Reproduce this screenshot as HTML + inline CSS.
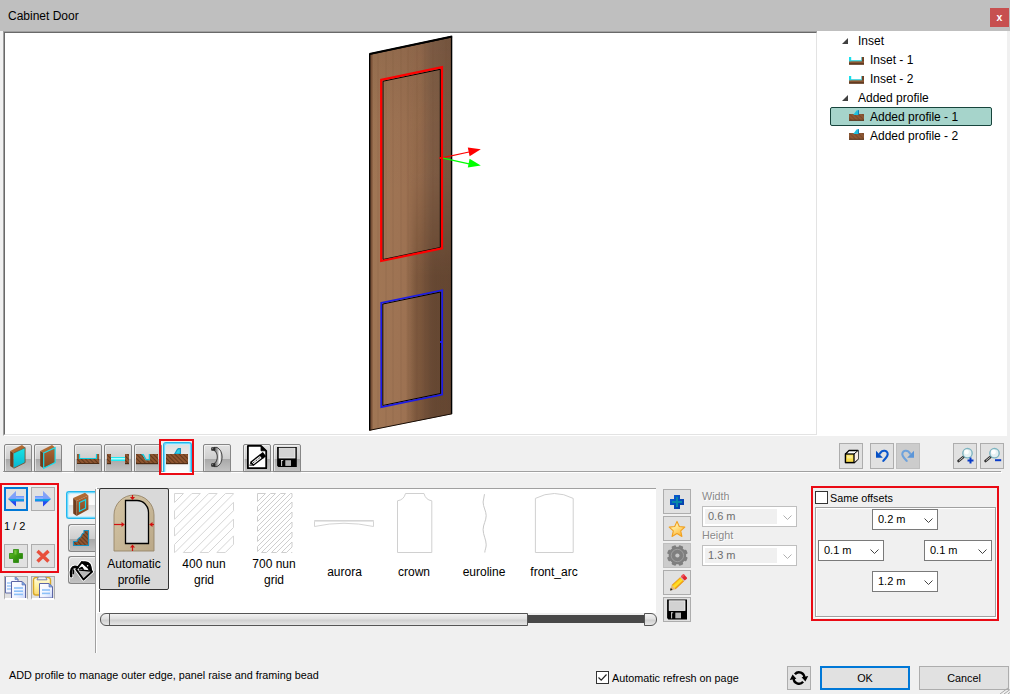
<!DOCTYPE html>
<html><head><meta charset="utf-8"><title>Cabinet Door</title>
<style>
*{box-sizing:border-box;margin:0;padding:0}
html,body{width:1010px;height:694px;overflow:hidden;background:#f0f0f0}
body{position:relative;font-family:"Liberation Sans",sans-serif;font-size:12px;color:#000}
.abs{position:absolute}
#title{left:0;top:0;width:1010px;height:31px;background:#bfbfbf}
#title span{position:absolute;left:8px;top:9px;font-size:12px;line-height:15px;color:#000}
#close{left:990px;top:8px;width:19px;height:19px;background:#c75050;color:#fff;font-weight:bold;font-size:10.5px;line-height:19px;text-align:center}
#view{left:3px;top:31px;width:815px;height:405px;background:#fff;border-style:solid;border-width:1px;border-color:#a0a0a0 #fff #fff #a0a0a0}
#view:before{content:"";position:absolute;left:0;top:0;right:0;bottom:0;border-style:solid;border-width:1px;border-color:#696969 #e3e3e3 #e3e3e3 #696969}
#tree{left:817px;top:31px;width:190px;height:405px;background:#fff}
.trow{position:absolute;left:0;height:19px;line-height:21px;font-size:12px;white-space:nowrap}
.tri{position:absolute;width:0;height:0;border-left:6px solid transparent;border-bottom:6px solid #404040}
.sep{left:3px;top:471px;width:998px;height:1px;background:#a0a0a0}
.sep2{left:3px;top:472px;width:999px;height:1px;background:#fff}
.tb{position:absolute;width:28px;height:28px;top:444px;box-shadow:0 1px 0 #f0f0f0,inset 1px 1px 0 rgba(255,255,255,0.55);border:1px solid #868686;border-radius:2px 2px 0 0;background:linear-gradient(#e2e2e2 0,#cecece 53%,#a8a8a8 54%,#c2c2c2 100%)}
.fb{position:absolute;background:#e1e1e1;border:1px solid #adadad}
.redbox{position:absolute;border:2px solid #ea0a14}
.tah{font-size:10.8px}
.lbl{text-align:center;font-size:12px;line-height:16px;white-space:nowrap}
.combo{position:absolute;height:21px;background:#fff;border:1px solid #7a7a7a;font-size:11px;line-height:19px;padding-left:5px}
.combo svg{position:absolute;right:4px;top:8px}
</style></head><body>
<div id="title" class="abs"><span>Cabinet Door</span></div>
<div id="close" class="abs">x</div>
<div id="view" class="abs"><svg class="abs" style="left:1px;top:1px" width="811" height="401" viewBox="5 33 811 401">
<defs>
<linearGradient id="wood" x1="0" x2="1" y1="0" y2="0">
<stop offset="0" stop-color="#a17755"/><stop offset="0.35" stop-color="#9e7353"/><stop offset="0.62" stop-color="#9a6f50"/><stop offset="0.74" stop-color="#87634a"/><stop offset="1" stop-color="#7d5b43"/>
</linearGradient>
<linearGradient id="woodv" x1="0" x2="0" y1="0" y2="1">
<stop offset="0" stop-color="#fff" stop-opacity="0"/><stop offset="0.35" stop-color="#fff" stop-opacity="0.25"/><stop offset="0.6" stop-color="#fff" stop-opacity="1"/><stop offset="1" stop-color="#fff" stop-opacity="1"/>
</linearGradient>
<linearGradient id="shade" x1="0" x2="1" y1="0" y2="0">
<stop offset="0.44" stop-color="#2a1608" stop-opacity="0"/><stop offset="0.56" stop-color="#2a1608" stop-opacity="0.26"/><stop offset="0.8" stop-color="#2a1608" stop-opacity="0.34"/><stop offset="1" stop-color="#2a1608" stop-opacity="0.3"/>
</linearGradient>
<linearGradient id="topd" x1="0" x2="0" y1="0" y2="1"><stop offset="0" stop-color="#3a2a20" stop-opacity="0.14"/><stop offset="0.22" stop-color="#3a2a20" stop-opacity="0.03"/><stop offset="0.4" stop-color="#3a2a20" stop-opacity="0"/></linearGradient>
<mask id="vm" maskUnits="userSpaceOnUse" x="360" y="30" width="100" height="410"><rect x="360" y="30" width="100" height="410" fill="url(#woodv)"/></mask>
</defs>
<polygon points="369.5,54 452,36.5 452,414 369.5,430.5" fill="url(#wood)"/>
<polygon points="369.5,54 452,36.5 452,414 369.5,430.5" fill="url(#shade)" mask="url(#vm)"/><polygon points="369.5,54 452,36.5 452,414 369.5,430.5" fill="url(#topd)"/>
<g stroke="#6f4a33" stroke-width="1" opacity="0.18">
<line x1="378" y1="53" x2="378" y2="429"/><line x1="386" y1="51" x2="386" y2="427"/><line x1="393" y1="50" x2="393" y2="426"/><line x1="401" y1="48" x2="401" y2="424"/><line x1="408" y1="46" x2="408" y2="423"/><line x1="417" y1="45" x2="417" y2="421"/><line x1="425" y1="43" x2="425" y2="419"/><line x1="433" y1="41" x2="433" y2="418"/><line x1="446" y1="39" x2="446" y2="415"/>
</g>
<polygon points="369.5,54 372.5,53.4 372.5,430 369.5,430.5" fill="#7a5238"/>
<polyline points="369.7,430.5 369.7,54 451.6,36.7 451.6,414" fill="none" stroke="#000" stroke-width="1.4"/>
<line x1="369.5" y1="54" x2="452" y2="36.5" stroke="#000" stroke-width="2"/>
<line x1="369.5" y1="430.3" x2="452" y2="413.8" stroke="#1a0f08" stroke-width="1"/>
<!-- red frame -->
<polygon points="383,81.2 440.3,69.3 440.3,247.5 383,259.5" fill="none" stroke="#000" stroke-width="1"/>
<polygon points="381.2,79.8 442,67.2 442,248.3 381.2,261" fill="none" stroke="#f00" stroke-width="2.2"/>
<!-- blue frame -->
<polygon points="382.8,304 440.6,292 440.6,393.5 382.8,405.5" fill="none" stroke="#000" stroke-width="1"/>
<polygon points="381.2,302.8 442.2,290.2 442.2,394.6 381.2,407.2" fill="none" stroke="#1c1ce6" stroke-width="1.7"/>
<rect x="440" y="341" width="3" height="2" fill="#1c1ce6"/>
<!-- axes -->
<line x1="439.5" y1="158" x2="444" y2="158" stroke="#f00" stroke-width="2"/>
<line x1="442" y1="157.8" x2="469" y2="152" stroke="#f00" stroke-width="1.2"/>
<polygon points="467.8,147.4 480.8,149.3 469.6,156.2" fill="#f00"/>
<line x1="443" y1="158.2" x2="469" y2="163.8" stroke="#0f0" stroke-width="1.2"/>
<polygon points="469.6,158.8 480.8,165.6 467.8,167.6" fill="#0f0"/>
</svg></div>
<div id="tree" class="abs"><div class="tri" style="left:25px;top:7px"></div><div class="trow" style="left:41px;top:0px">Inset</div><svg class="abs" style="left:32px;top:26px" width="15" height="8" viewBox="0 0 15 8"><rect x="0" y="4" width="15" height="3.6" fill="#96603a"/><rect x="0" y="5.6" width="15" height="1" fill="#7a4a2a"/><rect x="0" y="6.4" width="15" height="1.2" fill="#4e2e18"/><rect x="0" y="0" width="2.2" height="4.2" fill="#18e0ec"/><rect x="0" y="3.2" width="13" height="1.1" fill="#30d0dc"/><rect x="12.6" y="0" width="2.4" height="4.4" fill="#704428"/><rect x="12" y="0" width="0.8" height="4" fill="#60c8d0"/></svg><div class="trow" style="left:53px;top:19px">Inset - 1</div><svg class="abs" style="left:32px;top:45px" width="15" height="8" viewBox="0 0 15 8"><rect x="0" y="4" width="15" height="3.6" fill="#96603a"/><rect x="0" y="5.6" width="15" height="1" fill="#7a4a2a"/><rect x="0" y="6.4" width="15" height="1.2" fill="#4e2e18"/><rect x="0" y="0" width="2.2" height="4.2" fill="#18e0ec"/><rect x="0" y="3.2" width="13" height="1.1" fill="#30d0dc"/><rect x="12.6" y="0" width="2.4" height="4.4" fill="#704428"/><rect x="12" y="0" width="0.8" height="4" fill="#60c8d0"/></svg><div class="trow" style="left:53px;top:38px">Inset - 2</div><div class="tri" style="left:25px;top:64px"></div><div class="trow" style="left:41px;top:57px">Added profile</div><div class="abs" style="left:13px;top:76px;width:162px;height:19px;background:#a6d4cb;border:1px solid #17443c;border-radius:2px"></div><svg class="abs" style="left:32px;top:79px" width="15" height="11" viewBox="0 0 15 11"><rect x="0" y="4" width="15" height="6.6" fill="#8c5a38"/><rect x="0" y="4" width="15" height="6.6" fill="url(#hatch)" opacity="0.45"/><rect x="0" y="9.8" width="15" height="0.9" fill="#4e2e18"/><polygon points="4.2,5 7.8,0.2 9.8,0.2 9.8,5" fill="#20c0dc"/><rect x="9" y="0.2" width="0.9" height="4.8" fill="#1274b4"/></svg><div class="trow" style="left:53px;top:76px">Added profile - 1</div><svg class="abs" style="left:32px;top:98px" width="15" height="11" viewBox="0 0 15 11"><rect x="0" y="4" width="15" height="6.6" fill="#8c5a38"/><rect x="0" y="4" width="15" height="6.6" fill="url(#hatch)" opacity="0.45"/><rect x="0" y="9.8" width="15" height="0.9" fill="#4e2e18"/><polygon points="4.2,5 7.8,0.2 9.8,0.2 9.8,5" fill="#20c0dc"/><rect x="9" y="0.2" width="0.9" height="4.8" fill="#1274b4"/></svg><div class="trow" style="left:53px;top:95px">Added profile - 2</div></div>
<div class="abs sep"></div><div class="abs sep2"></div>
<!--TOOLBAR--><svg width="0" height="0" style="position:absolute"><defs>
<linearGradient id="cy" x1="0" y1="0" x2="0" y2="1"><stop offset="0" stop-color="#18e4e4"/><stop offset="1" stop-color="#08b4d0"/></linearGradient>
<linearGradient id="br" x1="0" y1="0" x2="0" y2="1"><stop offset="0" stop-color="#ac6634"/><stop offset="1" stop-color="#7e451f"/></linearGradient>
<linearGradient id="brh" x1="0" y1="0" x2="0" y2="1"><stop offset="0" stop-color="#a86434"/><stop offset="0.8" stop-color="#8a4e26"/><stop offset="1" stop-color="#5a3418"/></linearGradient>
<pattern id="hatch" width="3" height="3" patternUnits="userSpaceOnUse" patternTransform="rotate(-45)"><rect width="3" height="3" fill="#8e5530"/><rect width="1" height="3" fill="#63391c"/></pattern>
<linearGradient id="metal" x1="0" y1="0" x2="1" y2="0"><stop offset="0" stop-color="#555"/><stop offset="0.35" stop-color="#999"/><stop offset="0.7" stop-color="#fafafa"/><stop offset="1" stop-color="#aaa"/></linearGradient>
</defs></svg>
<div class="tb" style="left:4px"><svg class="abs" style="left:-1px;top:-1px" width="28" height="28" viewBox="0 0 28 28"><polygon points="6.2,7 18,1 21.1,3.6 9.7,9" fill="#b06a32"/><polygon points="6.2,7 9.7,9 9.7,24.3 6.2,22" fill="#6e3c1c"/><polygon points="9.7,9 21.1,3.6 21.1,18.6 9.7,24.3" fill="url(#cy)"/><polyline points="9.7,9 21.1,3.6 21.1,18.6 9.7,24.3" fill="none" stroke="#7a4420" stroke-width="0.8"/></svg></div>
<div class="tb" style="left:34px"><svg class="abs" style="left:-1px;top:-1px" width="28" height="28" viewBox="0 0 28 28"><polygon points="6.2,7 18,1 21.1,3.6 9.7,9" fill="#b06a32"/><polygon points="6.2,7 9.7,9 9.7,24.3 6.2,22" fill="#6e3c1c"/><polygon points="9.7,9 21.1,3.6 21.1,18.6 9.7,24.3" fill="url(#br)" stroke="#18dcec" stroke-width="1.2"/></svg></div>
<div class="tb" style="left:74px"><svg class="abs" style="left:-1px;top:-1px" width="28" height="28" viewBox="0 0 28 28"><rect x="3" y="10" width="2" height="10" fill="#96582c"/><rect x="23" y="10" width="2.1" height="10" fill="#96582c"/><rect x="3" y="15" width="22.1" height="5" fill="url(#hatch)"/><rect x="3" y="19" width="22.1" height="1" fill="#4e2c14"/><polyline points="5.5,10 5.5,14.5 22.5,14.5 22.5,10" fill="none" stroke="#10cce0" stroke-width="1.2"/></svg></div>
<div class="tb" style="left:104px"><svg class="abs" style="left:-1px;top:-1px" width="28" height="28" viewBox="0 0 28 28"><rect x="3" y="10" width="4" height="10" fill="url(#hatch)"/><rect x="21" y="10" width="4" height="10" fill="url(#hatch)"/><rect x="3" y="19" width="4" height="1.2" fill="#4e2c14"/><rect x="21" y="19" width="4" height="1.2" fill="#4e2c14"/><rect x="7" y="13" width="14" height="4" fill="#20e8f0"/><rect x="7" y="14" width="14" height="1.5" fill="#b0ffff"/></svg></div>
<div class="tb" style="left:134px"><svg class="abs" style="left:-1px;top:-1px" width="28" height="28" viewBox="0 0 28 28"><polygon points="2,10 8,10 11.6,16.2 16,16.2 16,10 24,10 24,20 2,20" fill="url(#hatch)"/><rect x="2" y="19" width="22" height="1.2" fill="#4e2c14"/><polyline points="7.5,10.6 9.2,10.6 12,15.6 15.4,15.6 15.4,10" fill="none" stroke="#14c8dc" stroke-width="1.3"/></svg></div>
<div class="tb" style="left:203px"><svg class="abs" style="left:-1px;top:-1px" width="28" height="28" viewBox="0 0 28 28"><path d="M11,3.4 L14,3.4 C20.8,6.5 20.8,19.5 14,22.6 L11,22.6 L11,19.6 C15.4,17.5 15.4,8.5 11,6.4 Z" fill="url(#metal)" stroke="#333" stroke-width="0.9"/><rect x="8.2" y="3.2" width="4" height="3.6" rx="0.8" fill="#2a2a2a"/><rect x="8.2" y="19.2" width="4" height="3.6" rx="0.8" fill="#2a2a2a"/><rect x="9" y="4" width="1.2" height="1.2" fill="#777"/><rect x="9" y="20" width="1.2" height="1.2" fill="#777"/></svg></div>
<div class="tb" style="left:243px"><svg class="abs" style="left:-1px;top:-1px" width="28" height="28" viewBox="0 0 28 28"><path d="M4.9,1.9 L18,1.9 L23.2,6.8 L23.2,24.2 L4.9,24.2 Z" fill="#fff" stroke="#000" stroke-width="1.8" stroke-linejoin="round"/><path d="M18,1.9 L18,6.8 L23.2,6.8 Z" fill="#000" stroke="#000" stroke-width="0.8"/><g transform="translate(9.2,19.6) rotate(-37.6)"><rect x="0" y="-2" width="11.5" height="4" fill="#fff" stroke="#000" stroke-width="1.3"/><line x1="1" y1="0" x2="11" y2="0" stroke="#000" stroke-width="0.9" stroke-dasharray="1,1"/><rect x="11.5" y="-2.7" width="4" height="5.4" fill="#000"/><polygon points="0,-2.4 -3.6,0 0,2.4" fill="#000"/><polygon points="-1.2,-0.8 -2.6,0 -1.2,0.8" fill="#fff"/></g></svg></div>
<div class="tb" style="left:273px"><svg class="abs" style="left:-1px;top:-1px" width="28" height="28" viewBox="0 0 28 28"><path d="M4.1,3 H23.8 V23 H5.4 L4.1,21.7 Z" fill="#000"/><rect x="6.2" y="4.2" width="15.8" height="9.8" fill="#d2d2d2" stroke="#f4f4f4" stroke-width="0.8"/><rect x="12.3" y="16.2" width="5.7" height="5.7" fill="#b4b4b4"/><rect x="8.2" y="16" width="0.9" height="6" fill="#e8e8e8"/><rect x="8.2" y="16" width="2" height="0.8" fill="#e8e8e8"/></svg></div>
<div class="abs" style="left:163px;top:442px;width:29px;height:30px;border:1px solid #22b8ee;border-bottom:none;border-radius:3px 3px 0 0;background:linear-gradient(#dedede,#ececec 45%,#fdfdfd);box-shadow:inset 1px 1px 0 #6fd6fa,inset -1px 0 0 #6fd6fa,inset 2px 2px 1px #c4eefc,inset -2px 0 1px #c4eefc"><svg class="abs" style="left:0px;top:1px" width="28" height="28" viewBox="0 0 28 28"><path d="M9,10.4 C11.5,9.6 11.8,4.8 14.4,4 L17,4 L17,10.4 Z" fill="#1498c4"/><path d="M11.4,9.6 C12.8,8 13.2,5.8 14.8,5.2 L15.8,5.2 L15.8,9.6 Z" fill="#2cd0e8"/><rect x="2" y="10" width="22" height="10" fill="url(#hatch)"/><rect x="2" y="19" width="22" height="1.2" fill="#4e2c14"/></svg></div>
<div class="redbox" style="left:159px;top:439px;width:35px;height:36px"></div>
<div class="fb" style="left:839px;top:443px;width:24px;height:26px;"><svg class="abs" style="left:4px;top:5px" width="16" height="15" viewBox="0 0 16 15"><polygon points="1.5,5 5,1.5 14,1.5 14,10 10.5,13.5 1.5,13.5" fill="#fff" stroke="#000" stroke-width="1.3" stroke-linejoin="round"/><polygon points="10,5 14,1.5 14,10 10,13.5" fill="#f8ece6"/><rect x="1.5" y="5" width="8.5" height="8.5" fill="#f8dc50" stroke="#000" stroke-width="1.3"/><rect x="3" y="6.5" width="5.5" height="3" fill="#fcf0a0" opacity="0.8"/><polyline points="10,5 14,1.5" fill="none" stroke="#000" stroke-width="1"/></svg></div>
<div class="fb" style="left:870px;top:443px;width:24px;height:26px;"><svg class="abs" style="left:-1px;top:-1px" width="24" height="26" viewBox="0 0 24 26"><path d="M9.8,10.6 C11,8.6 13,7.5 14.8,7.8 C17.4,8.3 18.3,10.6 17.3,12.7 C16.4,14.6 14.6,16.4 13.3,17.9" fill="none" stroke="#0a56cc" stroke-width="2.1" stroke-linecap="round"/><polygon points="6,7.7 6,14.7 12.9,14.7" fill="#0650c4"/></svg></div>
<div class="fb" style="left:896px;top:443px;width:24px;height:26px;background:#cccccc;border-color:#bfbfbf"><svg class="abs" style="left:-1px;top:-1px" width="24" height="26" viewBox="0 0 24 26"><g transform="translate(24,0) scale(-1,1)"><path d="M9.8,10.6 C11,8.6 13,7.5 14.8,7.8 C17.4,8.3 18.3,10.6 17.3,12.7 C16.4,14.6 14.6,16.4 13.3,17.9" fill="none" stroke="#6ea2dc" stroke-width="2.1" stroke-linecap="round"/><polygon points="6,7.7 6,14.7 12.9,14.7" fill="#5c96d8"/></g></svg></div>
<div class="fb" style="left:953px;top:443px;width:24px;height:26px;"><svg class="abs" style="left:2px;top:3px" width="20" height="18" viewBox="0 0 20 18"><line x1="2.5" y1="14" x2="8" y2="9.5" stroke="#333" stroke-width="2.6" stroke-linecap="round"/><line x1="3" y1="13.6" x2="7" y2="10.3" stroke="#ccc" stroke-width="0.9"/><circle cx="11.5" cy="6.2" r="4.7" fill="#e4f0f2" stroke="#7db4c0" stroke-width="1.4"/><circle cx="10.5" cy="5" r="2.4" fill="#fff" opacity="0.9"/><path d="M11.5,12.5 h2 v-2 h2 v2 h2 v2 h-2 v2 h-2 v-2 h-2 z" fill="#0a3cc8"/></svg></div>
<div class="fb" style="left:980px;top:443px;width:24px;height:26px;"><svg class="abs" style="left:2px;top:3px" width="20" height="18" viewBox="0 0 20 18"><line x1="2.5" y1="14" x2="8" y2="9.5" stroke="#333" stroke-width="2.6" stroke-linecap="round"/><line x1="3" y1="13.6" x2="7" y2="10.3" stroke="#ccc" stroke-width="0.9"/><circle cx="11.5" cy="6.2" r="4.7" fill="#e4f0f2" stroke="#7db4c0" stroke-width="1.4"/><circle cx="10.5" cy="5" r="2.4" fill="#fff" opacity="0.9"/><rect x="12" y="12.2" width="6.2" height="2" fill="#0a3cc8"/></svg></div>
<!--/TOOLBAR-->
<!--NAV--><div class="redbox" style="left:0;top:483px;width:59px;height:90px"></div>
<div class="fb" style="left:4px;top:487px;width:24px;height:24px;border:2px solid #0078d7"><svg class="abs" style="left:-2px;top:-2px" width="24" height="24" viewBox="0 0 24 24"><defs><linearGradient id="ara" x1="0" y1="0" x2="0" y2="1"><stop offset="0" stop-color="#7a9cf8"/><stop offset="0.48" stop-color="#6f98ff"/><stop offset="0.5" stop-color="#18a0e8"/><stop offset="0.62" stop-color="#0898e0"/><stop offset="0.7" stop-color="#2850f0"/><stop offset="1" stop-color="#2040f0"/></linearGradient></defs><g ><polygon points="4,12 12,4 12,9 20,9 20,14.5 12,14.5 12,19.5" fill="url(#ara)"/><polygon points="4,12 12,4 12,12" fill="#8aa8f6" opacity="0.55"/><rect x="12" y="10.6" width="8" height="1" fill="#c8d8ff" opacity="0.7"/></g></svg></div>
<div class="fb" style="left:31px;top:487px;width:24px;height:24px;"><svg class="abs" style="left:-1px;top:-1px" width="24" height="24" viewBox="0 0 24 24"><defs><linearGradient id="arb" x1="0" y1="0" x2="0" y2="1"><stop offset="0" stop-color="#7a9cf8"/><stop offset="0.48" stop-color="#6f98ff"/><stop offset="0.5" stop-color="#18a0e8"/><stop offset="0.62" stop-color="#0898e0"/><stop offset="0.7" stop-color="#2850f0"/><stop offset="1" stop-color="#2040f0"/></linearGradient></defs><g transform="translate(24,0) scale(-1,1)"><polygon points="4,12 12,4 12,9 20,9 20,14.5 12,14.5 12,19.5" fill="url(#arb)"/><polygon points="4,12 12,4 12,12" fill="#8aa8f6" opacity="0.55"/><rect x="12" y="10.6" width="8" height="1" fill="#c8d8ff" opacity="0.7"/></g></svg></div>
<div class="abs tah" style="left:4px;top:520px;line-height:13px;font-size:11px">1 / 2</div>
<div class="fb" style="left:4px;top:544px;width:24px;height:24px;"><svg class="abs" style="left:-1px;top:-1px" width="24" height="24" viewBox="0 0 24 24"><defs><linearGradient id="gp" x1="0" y1="0" x2="1" y2="1"><stop offset="0" stop-color="#6cc030"/><stop offset="0.5" stop-color="#3c9c10"/><stop offset="1" stop-color="#1c7408"/></linearGradient></defs><path d="M9.5,5.5 h5 v4 h4 v5 h-4 v4 h-5 v-4 h-4 v-5 h4 z" fill="url(#gp)" stroke="#2a8a0c" stroke-width="0.8"/><path d="M10.5,6.5 h2 v4 h-6 v-0 h4 z" fill="#9ce060" opacity="0.5"/></svg></div>
<div class="fb" style="left:31px;top:544px;width:24px;height:24px;"><svg class="abs" style="left:-1px;top:-1px" width="24" height="24" viewBox="0 0 24 24"><path d="M6.5,7 L17.5,17.5 M17.5,7 L6.5,17.5" stroke="#e8503c" stroke-width="3.4" stroke-linecap="butt"/></svg></div>
<div class="fb" style="left:4px;top:576px;width:24px;height:24px;border-bottom:2px solid #fff;overflow:hidden"><svg class="abs" style="left:-1px;top:-1px" width="24" height="24" viewBox="0 0 24 24"><defs><linearGradient id="pg" x1="0" y1="0" x2="1" y2="1"><stop offset="0" stop-color="#fff"/><stop offset="0.6" stop-color="#f0f4ff"/><stop offset="1" stop-color="#c8d4f8"/></linearGradient></defs>
<path d="M1.5,0.5 H11 L14,3.5 V17 H1.5 Z" fill="url(#pg)" stroke="#6470a8" stroke-width="1"/><path d="M11,0.5 L11,3.5 L14,3.5 Z" fill="#7ab0f0" stroke="#6470a8" stroke-width="0.6"/><g stroke="#9cc8f8" stroke-width="1.5"><line x1="3" y1="7" x2="8" y2="7"/><line x1="3" y1="10" x2="8" y2="10"/><line x1="3" y1="13" x2="8" y2="13"/></g>
<path d="M7.5,5.5 H18 L21.5,9 V22.5 H7.5 Z" fill="url(#pg)" stroke="#5c66a6" stroke-width="1"/><path d="M18,5.5 L18,9 L21.5,9 Z" fill="#7ab0f0" stroke="#5c66a6" stroke-width="0.6"/><g stroke="#8cc0f8" stroke-width="1.6"><line x1="10" y1="12" x2="19" y2="12"/><line x1="10" y1="15.2" x2="19" y2="15.2"/><line x1="10" y1="18.4" x2="19" y2="18.4"/></g></svg></div>
<div class="fb" style="left:31px;top:576px;width:24px;height:24px;border-bottom:2px solid #fff;overflow:hidden"><svg class="abs" style="left:-1px;top:-1px" width="24" height="24" viewBox="0 0 24 24"><defs><linearGradient id="cb" x1="0" y1="0" x2="0" y2="1"><stop offset="0" stop-color="#fffbe0"/><stop offset="0.5" stop-color="#fff2a0"/><stop offset="1" stop-color="#fcd870"/></linearGradient></defs>
<rect x="2.5" y="1.5" width="17" height="17.5" rx="2.5" fill="url(#cb)" stroke="#d8a828" stroke-width="1.4"/><path d="M6,3.8 L7.5,0.8 H14.5 L16,3.8 Z" fill="#f0f0f4" stroke="#7884a8" stroke-width="1"/>
<path d="M8.5,7.5 H18 L21.5,11 V22 H8.5 Z" fill="url(#pg)" stroke="#5c66a6" stroke-width="1"/><path d="M18,7.5 L18,11 L21.5,11 Z" fill="#7ab0f0" stroke="#5c66a6" stroke-width="0.6"/><g stroke="#8cc0f8" stroke-width="1.6"><line x1="11" y1="14" x2="19" y2="14"/><line x1="11" y1="17.4" x2="19" y2="17.4"/></g></svg></div>
<!--/NAV-->
<!--LIST--><div class="abs" style="left:95px;top:489px;width:1px;height:164px;background:#a0a0a0"></div><div class="abs" style="left:96px;top:487px;width:1px;height:166px;background:#fff"></div>
<div class="abs" id="list" style="left:97px;top:488px;width:559px;height:125px;background:#fff;border-top:1px solid #a0a0a0"><div class="abs" style="left:2px;top:-1px;width:70px;height:102px;background:#d9d9d9;border:1px solid #333;border-radius:2px"><svg class="abs" style="left:13px;top:5px" width="42" height="58" viewBox="113 494 42 58">
<defs><linearGradient id="tan" x1="0" y1="0" x2="1" y2="1"><stop offset="0" stop-color="#d4c4a4"/><stop offset="0.5" stop-color="#c8b898"/><stop offset="1" stop-color="#baa888"/></linearGradient></defs>
<path d="M114,551 V515 A20,20 0 0 1 154,515 V551 Z" fill="url(#tan)" stroke="#96866a" stroke-width="0.9"/>
<path d="M125.5,543.5 V500.5 H137 A11.5,12 0 0 1 148.5,512.5 V543.5 Z" fill="#d9d9d9" stroke="#000" stroke-width="1.3"/>
<g stroke="#d01010" stroke-width="1.2" fill="#d01010">
<line x1="132.5" y1="495" x2="132.5" y2="499"/><polygon points="130,497 135,497 132.5,500" stroke="none"/>
<line x1="132.5" y1="551" x2="132.5" y2="546"/><polygon points="130,547.5 135,547.5 132.5,544.5" stroke="none"/>
<line x1="114" y1="524.5" x2="122" y2="524.5"/><polygon points="121.5,522 121.5,527 124.8,524.5" stroke="none"/>
<line x1="154" y1="524.5" x2="151" y2="524.5"/><polygon points="152.5,522 152.5,527 149.2,524.5" stroke="none"/>
</g></svg></div>
<div class="abs lbl" style="left:2px;top:67px;width:70px">Automatic<br>profile</div>
<div class="abs lbl" style="left:72px;top:67px;width:70px">400 nun<br>grid</div>
<div class="abs lbl" style="left:142px;top:67px;width:70px">700 nun<br>grid</div>
<div class="abs lbl" style="left:212.5px;top:75px;width:70px">aurora</div>
<div class="abs lbl" style="left:282px;top:75px;width:70px">crown</div>
<div class="abs lbl" style="left:352px;top:75px;width:70px">euroline</div>
<div class="abs lbl" style="left:422px;top:75px;width:70px">front_arc</div>
<svg width="0" height="0" style="position:absolute"><defs><pattern id="h1" width="5.3" height="5.3" patternUnits="userSpaceOnUse" patternTransform="rotate(-45)"><rect width="5.3" height="5.3" fill="#fff"/><rect width="5.3" height="1.1" fill="#dedede"/></pattern><pattern id="h2" width="2.8" height="2.8" patternUnits="userSpaceOnUse" patternTransform="rotate(-45)"><rect width="2.8" height="2.8" fill="#fff"/><rect width="2.8" height="0.9" fill="#d8d8d8"/></pattern></defs></svg>
<svg class="abs" style="left:77px;top:4px" width="61" height="61" viewBox="-0.5 -0.5 61 61"><rect x="0" y="0" width="59" height="59" fill="#fff"/><path d="M0.0,9.0L9.0,0.0M0.0,17.4L17.4,0.0M0.0,25.8L25.8,0.0M0.0,34.2L34.2,0.0M0.0,42.6L42.6,0.0M0.0,51.0L51.0,0.0M0.4,59.0L59.0,0.4M8.8,59.0L59.0,8.8M17.2,59.0L59.0,17.2M25.6,59.0L59.0,25.6M34.0,59.0L59.0,34.0M42.4,59.0L59.0,42.4M50.8,59.0L59.0,50.8M0.0,0H9.0M0,0.0V9.0M17.4,0H25.8M0,17.4V25.8M34.2,0H42.6M0,34.2V42.6M51.0,0H59.0M0,51.0V59.0M59,0.0V0.4M0.0,59H0.4M59,8.8V17.2M8.8,59H17.2M59,25.6V34.0M25.6,59H34.0M59,42.4V50.8M42.4,59H50.8" fill="none" stroke="#d6d6d6" stroke-width="1"/></svg>
<svg class="abs" style="left:160px;top:4px" width="36" height="61" viewBox="-0.5 -0.5 36 61"><rect x="0" y="0" width="34.5" height="59" fill="#fff"/><path d="M0.0,8.0L8.0,0.0M0.0,13.0L13.0,0.0M0.0,18.0L18.0,0.0M0.0,23.0L23.0,0.0M0.0,28.0L28.0,0.0M0.0,33.0L33.0,0.0M0.0,38.0L34.5,3.5M0.0,43.0L34.5,8.5M0.0,48.0L34.5,13.5M0.0,53.0L34.5,18.5M0.0,58.0L34.5,23.5M4.0,59.0L34.5,28.5M9.0,59.0L34.5,33.5M14.0,59.0L34.5,38.5M19.0,59.0L34.5,43.5M24.0,59.0L34.5,48.5M29.0,59.0L34.5,53.5M34.0,59.0L34.5,58.5M0.0,0H8.0M0,0.0V8.0M13.0,0H18.0M0,13.0V18.0M23.0,0H28.0M0,23.0V28.0M33.0,0H34.5M0,33.0V38.0M34.5,0.0V3.5M0,43.0V48.0M34.5,8.5V13.5M0,53.0V58.0M34.5,18.5V23.5M34.5,28.5V33.5M4.0,59H9.0M34.5,38.5V43.5M14.0,59H19.0M34.5,48.5V53.5M24.0,59H29.0M34.5,58.5V59.0M34.0,59H34.5" fill="none" stroke="#cecece" stroke-width="1"/></svg>
<svg class="abs" style="left:217px;top:4px" width="60" height="60" viewBox="0 0 60 60"><path d="M0.5,27.5 H59.5 V33.5 Q30,27 0.5,33.5 Z" fill="#fff" stroke="#d4d4d4" stroke-width="1"/><line x1="0.5" y1="28.4" x2="59.5" y2="28.4" stroke="#e4e4e4" stroke-width="1"/></svg>
<svg class="abs" style="left:287px;top:4px" width="60" height="60" viewBox="0 0 60 60"><path d="M13.5,59.5 V7.8 Q20,6.8 21.5,0.5 H40 Q41.5,6.8 47.8,7.8 V59.5 Z" fill="#fff" stroke="#d0d0d0" stroke-width="1"/></svg>
<svg class="abs" style="left:357px;top:4px" width="60" height="60" viewBox="0 0 60 60"><path d="M30.5,1.2 C30.5,4 29.1,6 29.1,9 C29.1,14 32.2,18 32.2,22.7 C32.2,27.5 29.1,31.5 29.1,36.6 C29.1,42 32.2,46.5 32.2,51.8 C32.2,55 30.8,57 30.8,59.5" fill="none" stroke="#c8c8c8" stroke-width="1"/></svg>
<svg class="abs" style="left:427px;top:4px" width="60" height="60" viewBox="0 0 60 60"><path d="M11.4,59.5 V5.4 Q30.3,-4.4 49.2,5.4 V59.5 Z" fill="#fff" stroke="#d0d0d0" stroke-width="1"/></svg></div>
<div class="abs" style="left:99px;top:590px;width:1px;height:22px;background:#666"></div>
<div class="abs" style="left:66px;top:491px;width:29px;height:28px;border:1px solid #22b8ee;border-right:none;border-radius:3px 0 0 3px;background:linear-gradient(#f4f4f4,#fcfcfc 48%,#dedede 50%,#f6f6f6);box-shadow:inset 1px 1px 0 #6fd6fa,inset 0 -1px 0 #6fd6fa,inset 2px 2px 1px #c4eefc,inset 0 -2px 1px #c4eefc">
<svg class="abs" style="left:-1px;top:-1px" width="30" height="28" viewBox="0 0 30 28"><polygon points="7.2,7 19,1.8 22.4,4.6 10.6,10" fill="#b06a32"/><polygon points="7.2,7 10.6,10 10.6,25 7.2,22.4" fill="#6e3c1c"/><polygon points="10.6,10 22.4,4.6 22.4,18.5 10.6,25" fill="url(#br)"/><polygon points="13.5,11.5 19.5,8.6 19.5,17.2 13.5,20.2" fill="none" stroke="#18d8ec" stroke-width="1.2"/></svg></div>
<div style="position:absolute;left:68px;width:27px;height:28px;border:1px solid #868686;border-right:none;border-radius:3px 0 0 3px;box-shadow:inset 1px 1px 0 rgba(255,255,255,0.55);background:linear-gradient(#e2e2e2 0,#cecece 53%,#a8a8a8 54%,#c2c2c2 100%);top:524px"><svg class="abs" style="left:-1px;top:-1px" width="28" height="28" viewBox="0 0 28 28"><path d="M5.5,21.5 V17.5 H9 C9,14.5 12,14 13,12.5 C14,11 13.5,9.5 16,9 V6.5 H20.5 V21.5 Z" fill="url(#hatch)" stroke="#1890c0" stroke-width="1.2" stroke-linejoin="round"/></svg></div>
<div style="position:absolute;left:68px;width:27px;height:28px;border:1px solid #868686;border-right:none;border-radius:3px 0 0 3px;box-shadow:inset 1px 1px 0 rgba(255,255,255,0.55);background:linear-gradient(#e2e2e2 0,#cecece 53%,#a8a8a8 54%,#c2c2c2 100%);top:556px"><svg class="abs" style="left:-1px;top:-1px" width="28" height="28" viewBox="0 0 28 28"><g stroke-linejoin="round" stroke-linecap="round">
<polygon points="13.9,6.1 24,15.7 15.5,23.5 8.2,13.4" fill="#fff" stroke="#fff" stroke-width="3.6"/>
<path d="M9.8,11.4 C7.4,10.6 4.8,10.8 3.8,12.8 C2.8,14.8 2.6,17 3.2,20.2" fill="none" stroke="#fff" stroke-width="4.4"/>
<path d="M13.9,6.1 C18.5,5.2 22.4,7 22.9,11 C23.1,13 23.5,14.6 24,15.7 Z" fill="#fff" stroke="#fff" stroke-width="3.6"/>
<polygon points="10.8,14.8 21.8,15.9 15.5,21.7" fill="#b8b8b8"/>
<polygon points="13.9,6.1 24,15.7 15.5,23.5 8.2,13.4" fill="none" stroke="#000" stroke-width="1.9"/>
<path d="M13.9,6.1 C18.5,5.2 22.4,7 22.9,11 C23.1,13 23.5,14.6 24,15.7 Z" fill="#000" stroke="#000" stroke-width="1.4"/>
<path d="M14.6,8.9 L19.2,13.1" stroke="#fff" stroke-width="1.3"/>
<circle cx="19.6" cy="9.7" r="0.75" fill="#fff"/>
<path d="M11.6,12.6 L14,11.4 L15.2,13.4" fill="#000" stroke="#000" stroke-width="1.4"/>
<path d="M11.4,14 L21.4,15" stroke="#000" stroke-width="1.7"/>
<path d="M9.8,11.4 C7.4,10.6 4.8,10.8 3.8,12.8 C2.8,14.8 2.6,17 3.2,20.2" fill="none" stroke="#000" stroke-width="2.5"/>
<path d="M5.4,14 L5.2,17.6" stroke="#000" stroke-width="1.5"/></g></svg></div>
<div class="abs" style="left:100px;top:613px;width:557px;height:13px">
<div class="abs" style="left:428px;top:2px;width:120px;height:8px;background:#484848"></div>
<div class="abs" style="left:0;top:0;width:428px;height:13px;border:1px solid #555;border-radius:6px 0 0 6px;background:linear-gradient(#f2f2f2,#e0e0e0 45%,#cfcfcf 55%,#e6e6e6)"></div>
<div class="abs" style="left:9px;top:1px;width:1px;height:11px;background:#666"></div>
<div class="abs" style="left:544px;top:0;width:13px;height:13px;border:1px solid #555;border-radius:0 6px 6px 0;background:linear-gradient(#f2f2f2,#e0e0e0 45%,#cfcfcf 55%,#e6e6e6)"></div>
</div>
<!--/LIST-->
<!--RIGHT--><div class="fb" style="left:663px;top:489px;width:28px;height:25px;"><svg class="abs" style="left:-1px;top:-1px" width="28" height="25" viewBox="0 0 28 25"><defs><linearGradient id="bp" x1="0" y1="0" x2="1" y2="1"><stop offset="0" stop-color="#0a64d8"/><stop offset="1" stop-color="#0438a0"/></linearGradient></defs><path d="M11,6 h6 v4 h4 v6 h-4 v4 h-6 v-4 h-4 v-6 h4 z" fill="url(#bp)"/><path d="M13,8 h2 v4 h4 v2 h-4 v4 h-2 v-4 h-4 v-2 h4 z" fill="#0888a8"/></svg></div>
<div class="fb" style="left:663px;top:516px;width:28px;height:25px;"><svg class="abs" style="left:-1px;top:-1px" width="28" height="25" viewBox="0 0 28 25"><defs><linearGradient id="st" x1="0" y1="0" x2="0.6" y2="1"><stop offset="0" stop-color="#fffef4"/><stop offset="0.45" stop-color="#ffe898"/><stop offset="1" stop-color="#ffb838"/></linearGradient></defs><polygon points="14,5.4 16.3,10.5 21.8,11.1 17.7,14.9 18.9,20.4 14,17.6 9.1,20.4 10.3,14.9 6.2,11.1 11.7,10.5" fill="url(#st)" stroke="#f0a020" stroke-width="1.1" stroke-linejoin="round"/></svg></div>
<div class="fb" style="left:663px;top:543px;width:28px;height:25px;background:#cccccc;border-color:#bfbfbf"><svg class="abs" style="left:-1px;top:-1px" width="28" height="25" viewBox="0 0 28 25"><g fill="#7f7f7f"><circle cx="14.4" cy="12.5" r="8.7"/><rect x="12.1" y="2.1" width="4.6" height="4" rx="1.2" transform="rotate(22.5 14.4 12.5)"/><rect x="12.1" y="2.1" width="4.6" height="4" rx="1.2" transform="rotate(67.5 14.4 12.5)"/><rect x="12.1" y="2.1" width="4.6" height="4" rx="1.2" transform="rotate(112.5 14.4 12.5)"/><rect x="12.1" y="2.1" width="4.6" height="4" rx="1.2" transform="rotate(157.5 14.4 12.5)"/><rect x="12.1" y="2.1" width="4.6" height="4" rx="1.2" transform="rotate(202.5 14.4 12.5)"/><rect x="12.1" y="2.1" width="4.6" height="4" rx="1.2" transform="rotate(247.5 14.4 12.5)"/><rect x="12.1" y="2.1" width="4.6" height="4" rx="1.2" transform="rotate(292.5 14.4 12.5)"/><rect x="12.1" y="2.1" width="4.6" height="4" rx="1.2" transform="rotate(337.5 14.4 12.5)"/></g><circle cx="14.4" cy="12.5" r="6.2" fill="none" stroke="#a6a6a6" stroke-width="0.8"/><circle cx="14.4" cy="12.5" r="2.1" fill="#c6c6c6"/></svg></div>
<div class="fb" style="left:663px;top:570px;width:28px;height:25px;"><svg class="abs" style="left:-1px;top:-1px" width="28" height="25" viewBox="0 0 28 25"><defs><linearGradient id="pn" x1="0" y1="0" x2="0" y2="1"><stop offset="0" stop-color="#e88c10"/><stop offset="0.3" stop-color="#ffd818"/><stop offset="0.6" stop-color="#ffe030"/><stop offset="1" stop-color="#e88000"/></linearGradient></defs>
<g transform="translate(7,20.5) rotate(-43)"><polygon points="0,0 5,-2.9 5,2.9" fill="#e4b878"/><polygon points="0,0 2.4,-1.4 2.4,1.4" fill="#222"/><rect x="5" y="-2.9" width="11.5" height="5.8" fill="url(#pn)"/><rect x="16.5" y="-2.9" width="1" height="5.8" fill="#c8a8a0"/><rect x="17.5" y="-2.9" width="3.7" height="5.8" rx="0.9" fill="#e02830"/><rect x="17.5" y="-2.9" width="3.7" height="2" rx="0.9" fill="#f05058"/></g></svg></div>
<div class="fb" style="left:663px;top:597px;width:28px;height:25px;"><svg class="abs" style="left:-1px;top:-1px" width="28" height="25" viewBox="0 0 28 25"><path d="M4.1,2.6 H24 V22.4 H5.4 L4.1,21.1 Z" fill="#000"/><rect x="6.2" y="3.8" width="15.8" height="9.6" fill="#d2d2d2" stroke="#f4f4f4" stroke-width="0.8"/><rect x="12.3" y="15.6" width="5.7" height="5.7" fill="#b4b4b4"/><rect x="8.2" y="15.4" width="0.9" height="6" fill="#e8e8e8"/><rect x="8.2" y="15.4" width="2" height="0.8" fill="#e8e8e8"/></svg></div>
<div class="abs tah" style="left:702px;top:489px;line-height:14px;color:#8a8a8a;text-shadow:1px 1px 0 #fff">Width</div>
<div class="abs tah" style="left:702px;top:528px;line-height:14px;color:#8a8a8a;text-shadow:1px 1px 0 #fff">Height</div>
<div class="combo" style="left:702px;top:506px;width:95px;border-color:#bfbfbf;padding:0"><div class="abs" style="left:2px;top:2px;width:72px;height:15px;background:#f0f0f0;line-height:14px;padding-left:3px;color:#6d6d6d">0.6 m</div><svg width="9" height="5" viewBox="0 0 9 5"><polyline points="0.5,0.5 4.5,4.5 8.5,0.5" fill="none" stroke="#b0b0b0" stroke-width="1"/></svg></div>
<div class="combo" style="left:702px;top:545px;width:95px;border-color:#bfbfbf;padding:0"><div class="abs" style="left:2px;top:2px;width:72px;height:15px;background:#f0f0f0;line-height:14px;padding-left:3px;color:#6d6d6d">1.3 m</div><svg width="9" height="5" viewBox="0 0 9 5"><polyline points="0.5,0.5 4.5,4.5 8.5,0.5" fill="none" stroke="#b0b0b0" stroke-width="1"/></svg></div>
<div class="redbox" style="left:811px;top:486px;width:188px;height:135px"></div>
<div class="abs" style="left:815px;top:491px;width:13px;height:13px;background:#fff;border:1px solid #333"></div>
<div class="abs tah" style="left:830px;top:491px;line-height:14px">Same offsets</div>
<div class="abs" style="left:816px;top:508px;width:181px;height:110px;border:1px solid #fff"></div><div class="abs" style="left:815px;top:507px;width:181px;height:110px;border:1px solid #a0a0a0"></div>
<div class="combo" style="left:872px;top:509px;width:66px">0.2 m<svg width="9" height="5" viewBox="0 0 9 5"><polyline points="0.5,0.5 4.5,4.5 8.5,0.5" fill="none" stroke="#444" stroke-width="1"/></svg></div>
<div class="combo" style="left:818px;top:540px;width:66px">0.1 m<svg width="9" height="5" viewBox="0 0 9 5"><polyline points="0.5,0.5 4.5,4.5 8.5,0.5" fill="none" stroke="#444" stroke-width="1"/></svg></div>
<div class="combo" style="left:924px;top:540px;width:68px">0.1 m<svg width="9" height="5" viewBox="0 0 9 5"><polyline points="0.5,0.5 4.5,4.5 8.5,0.5" fill="none" stroke="#444" stroke-width="1"/></svg></div>
<div class="combo" style="left:872px;top:571px;width:66px">1.2 m<svg width="9" height="5" viewBox="0 0 9 5"><polyline points="0.5,0.5 4.5,4.5 8.5,0.5" fill="none" stroke="#444" stroke-width="1"/></svg></div>
<div class="abs tah" id="status" style="left:9px;top:668px;line-height:14px;white-space:nowrap">ADD profile to manage outer edge, panel raise and framing bead</div>
<div class="abs" style="left:596px;top:671px;width:13px;height:13px;background:#fff;border:1px solid #333"><svg class="abs" style="left:0;top:0" width="11" height="11" viewBox="0 0 11 11"><polyline points="1.5,5.5 4.2,8.2 9.5,2.5" fill="none" stroke="#222" stroke-width="1.2"/></svg></div>
<div class="abs tah" id="autoref" style="left:612px;top:671px;line-height:14px;white-space:nowrap">Automatic refresh on page</div>
<div class="fb" style="left:787px;top:666px;width:24px;height:24px;"><svg class="abs" style="left:-1px;top:-1px" width="24" height="24" viewBox="0 0 24 24"><path d="M7.9,8.2 A5.3,5.3 0 0 1 17.3,11.8" fill="none" stroke="#000" stroke-width="2.4"/><polygon points="14.6,11.3 21.2,10 18.4,15.6" fill="#000"/><path d="M16.1,15.8 A5.3,5.3 0 0 1 6.7,12.2" fill="none" stroke="#000" stroke-width="2.4"/><polygon points="9.4,12.8 2.8,14 5.6,8.4" fill="#000"/></svg></div>
<div class="fb" style="left:820px;top:666px;width:90px;height:24px;border:2px solid #0078d7"><div class="tah" style="text-align:center;line-height:20px">OK</div></div>
<div class="fb" style="left:919px;top:666px;width:90px;height:24px;"><div class="tah" style="text-align:center;line-height:22px">Cancel</div></div>
<svg class="abs" style="left:998px;top:684px" width="12" height="10" viewBox="0 0 12 10"><g stroke="#a8a8a8" stroke-width="1"><line x1="2" y1="10" x2="10" y2="4"/><line x1="6" y1="10" x2="12" y2="5.5"/><line x1="10" y1="10" x2="13" y2="7.5"/></g></svg>
<!--/RIGHT-->
</body></html>
